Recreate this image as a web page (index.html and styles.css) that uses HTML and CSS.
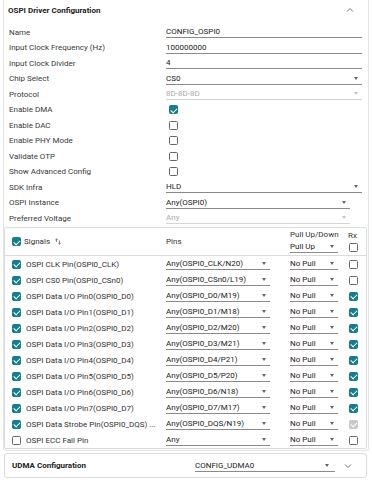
FILE: index.html
```html
<!DOCTYPE html>
<html>
<head>
<meta charset="utf-8">
<link rel="stylesheet" href="styles.css">
</head>
<body>
<div class="panel">
  <div class="panel-head">
    <span class="title">OSPI Driver Configuration</span>
    <svg class="chev" width="8" height="6" viewBox="0 0 8 6"><path d="M1 4.5 L4 1.5 L7 4.5" fill="none" stroke="#777" stroke-width="1"/></svg>
  </div>
  <div class="form">
    <div class="row"><span class="lbl">Name</span><div class="field text">CONFIG_OSPI0</div></div>
    <div class="row"><span class="lbl">Input Clock Frequency (Hz)</span><div class="field text">100000000</div></div>
    <div class="row"><span class="lbl">Input Clock Divider</span><div class="field text">4</div></div>
    <div class="row"><span class="lbl">Chip Select</span><div class="field select">CS0<i class="arr"></i></div></div>
    <div class="row"><span class="lbl">Protocol</span><div class="field select disabled">8D-8D-8D<i class="arr"></i></div></div>
    <div class="row"><span class="lbl">Enable DMA</span><span class="cb on"></span></div>
    <div class="row"><span class="lbl">Enable DAC</span><span class="cb"></span></div>
    <div class="row"><span class="lbl">Enable PHY Mode</span><span class="cb"></span></div>
    <div class="row"><span class="lbl">Validate OTP</span><span class="cb"></span></div>
    <div class="row"><span class="lbl">Show Advanced Config</span><span class="cb"></span></div>
    <div class="row"><span class="lbl">SDK Infra</span><div class="field select">HLD<i class="arr"></i></div></div>
    <div class="row"><span class="lbl">OSPI Instance</span><div class="field select short">Any(OSPI0)<i class="arr"></i></div></div>
    <div class="row"><span class="lbl">Preferred Voltage</span><div class="field select short disabled">Any<i class="arr"></i></div></div>
  </div>
  <div class="signals">
    <div class="sig-head">
      <div class="c-name"><span class="cb on"></span><span class="sig-title">Signals</span>
        <svg class="sort" width="6" height="7" viewBox="0 0 6 7"><path d="M1.5 4 V0.8 M0.4 1.9 L1.5 0.8 L2.6 1.9 M4.5 2.5 V6.2 M3.4 5.1 L4.5 6.2 L5.6 5.1" fill="none" stroke="#666" stroke-width="0.8"/></svg>
      </div>
      <div class="c-pins">Pins</div>
      <div class="c-pull"><span class="pud">Pull Up/Down</span><div class="sel pull">Pull Up<i class="arr"></i></div></div>
      <div class="c-rx"><span class="rx">Rx</span><span class="cb"></span></div>
    </div>
    <div class="sig-row"><div class="c-name"><span class="cb on"></span><span class="sn">OSPI CLK Pin(OSPI0_CLK)</span></div><div class="c-pins"><div class="sel pin">Any(OSPI0_CLK/N20)<i class="arr"></i></div></div><div class="c-pull"><div class="sel pull">No Pull<i class="arr"></i></div></div><div class="c-rx"><span class="cb"></span></div></div>
    <div class="sig-row"><div class="c-name"><span class="cb on"></span><span class="sn">OSPI CS0 Pin(OSPI0_CSn0)</span></div><div class="c-pins"><div class="sel pin">Any(OSPI0_CSn0/L19)<i class="arr"></i></div></div><div class="c-pull"><div class="sel pull">No Pull<i class="arr"></i></div></div><div class="c-rx"><span class="cb"></span></div></div>
    <div class="sig-row"><div class="c-name"><span class="cb on"></span><span class="sn">OSPI Data I/O Pin0(OSPI0_D0)</span></div><div class="c-pins"><div class="sel pin">Any(OSPI0_D0/M19)<i class="arr"></i></div></div><div class="c-pull"><div class="sel pull">No Pull<i class="arr"></i></div></div><div class="c-rx"><span class="cb on"></span></div></div>
    <div class="sig-row"><div class="c-name"><span class="cb on"></span><span class="sn">OSPI Data I/O Pin1(OSPI0_D1)</span></div><div class="c-pins"><div class="sel pin">Any(OSPI0_D1/M18)<i class="arr"></i></div></div><div class="c-pull"><div class="sel pull">No Pull<i class="arr"></i></div></div><div class="c-rx"><span class="cb on"></span></div></div>
    <div class="sig-row"><div class="c-name"><span class="cb on"></span><span class="sn">OSPI Data I/O Pin2(OSPI0_D2)</span></div><div class="c-pins"><div class="sel pin">Any(OSPI0_D2/M20)<i class="arr"></i></div></div><div class="c-pull"><div class="sel pull">No Pull<i class="arr"></i></div></div><div class="c-rx"><span class="cb on"></span></div></div>
    <div class="sig-row"><div class="c-name"><span class="cb on"></span><span class="sn">OSPI Data I/O Pin3(OSPI0_D3)</span></div><div class="c-pins"><div class="sel pin">Any(OSPI0_D3/M21)<i class="arr"></i></div></div><div class="c-pull"><div class="sel pull">No Pull<i class="arr"></i></div></div><div class="c-rx"><span class="cb on"></span></div></div>
    <div class="sig-row"><div class="c-name"><span class="cb on"></span><span class="sn">OSPI Data I/O Pin4(OSPI0_D4)</span></div><div class="c-pins"><div class="sel pin">Any(OSPI0_D4/P21)<i class="arr"></i></div></div><div class="c-pull"><div class="sel pull">No Pull<i class="arr"></i></div></div><div class="c-rx"><span class="cb on"></span></div></div>
    <div class="sig-row"><div class="c-name"><span class="cb on"></span><span class="sn">OSPI Data I/O Pin5(OSPI0_D5)</span></div><div class="c-pins"><div class="sel pin">Any(OSPI0_D5/P20)<i class="arr"></i></div></div><div class="c-pull"><div class="sel pull">No Pull<i class="arr"></i></div></div><div class="c-rx"><span class="cb on"></span></div></div>
    <div class="sig-row"><div class="c-name"><span class="cb on"></span><span class="sn">OSPI Data I/O Pin6(OSPI0_D6)</span></div><div class="c-pins"><div class="sel pin">Any(OSPI0_D6/N18)<i class="arr"></i></div></div><div class="c-pull"><div class="sel pull">No Pull<i class="arr"></i></div></div><div class="c-rx"><span class="cb on"></span></div></div>
    <div class="sig-row"><div class="c-name"><span class="cb on"></span><span class="sn">OSPI Data I/O Pin7(OSPI0_D7)</span></div><div class="c-pins"><div class="sel pin">Any(OSPI0_D7/M17)<i class="arr"></i></div></div><div class="c-pull"><div class="sel pull">No Pull<i class="arr"></i></div></div><div class="c-rx"><span class="cb on"></span></div></div>
    <div class="sig-row"><div class="c-name"><span class="cb on"></span><span class="sn">OSPI Data Strobe Pin(OSPI0_DQS) ...</span></div><div class="c-pins"><div class="sel pin">Any(OSPI0_DQS/N19)<i class="arr"></i></div></div><div class="c-pull"><div class="sel pull">No Pull<i class="arr"></i></div></div><div class="c-rx"><span class="cb on dis"></span></div></div>
    <div class="sig-row"><div class="c-name"><span class="cb"></span><span class="sn">OSPI ECC Fail Pin</span></div><div class="c-pins"><div class="sel pin">Any<i class="arr"></i></div></div><div class="c-pull"><div class="sel pull">No Pull<i class="arr"></i></div></div><div class="c-rx"><span class="cb"></span></div></div>
  </div>
</div>
<div class="udma">
  <span class="title">UDMA Configuration</span>
  <div class="sel udma-sel">CONFIG_UDMA0<i class="arr"></i></div>
  <svg class="chev" width="8" height="6" viewBox="0 0 8 6"><path d="M1 1.5 L4 4.5 L7 1.5" fill="none" stroke="#777" stroke-width="1"/></svg>
</div>
</body>
</html>
```
FILE: styles.css
```css
* { box-sizing: border-box; }
body {
  margin: 0;
  background: #fff;
  font-family: Roboto, "Noto Sans", sans-serif;
  font-size: 8px;
  color: #333;
}
.panel {
  margin: 0 3px;
  border: 1px solid #e4e4e4;
  border-top: none;
  border-radius: 0 0 3px 3px;
  padding-bottom: 1px;
}
.panel-head {
  height: 24.5px;
  display: flex;
  align-items: center;
  justify-content: space-between;
  padding: 0 14px 0 4px;
}
.title {
  font-weight: bold;
  color: #222;
  font-size: 8px;
}
.panel-head .title { margin-top: -3px; }
.chev { display: block; }
.panel-head .chev { margin-top: -4px; }
.form { padding: 0 6px 0 5px; }
.row {
  height: 15.5px;
  display: flex;
  align-items: center;
}
.lbl {
  width: 157px;
  flex: none;
  color: #3a3a3a;
}
.field {
  flex: 1;
  height: 12px;
  line-height: 11px;
  border-bottom: 1px solid #8a8a8a;
  position: relative;
  color: #222;
  white-space: nowrap;
}
.field.short { flex: none; width: 184px; }
.field.disabled { color: #aaa; border-bottom-color: #d4d4d4; }
.arr {
  position: absolute;
  right: 4px;
  top: 4px;
  width: 0;
  height: 0;
  border-left: 2.5px solid transparent;
  border-right: 2.5px solid transparent;
  border-top: 3px solid #666;
}
.disabled .arr { border-top-color: #c4c4c4; }
.cb {
  display: inline-block;
  flex: none;
  width: 9px;
  height: 9px;
  border: 1px solid #666;
  border-radius: 1.5px;
  background: #fff;
  position: relative;
}
.row .cb { margin-left: 3px; }
.cb.on {
  background: #177d8b;
  border-color: #177d8b;
}
.cb.on::after {
  content: "";
  position: absolute;
  left: 1.6px;
  top: 0.6px;
  width: 3px;
  height: 4.6px;
  border: solid #fff;
  border-width: 0 1.2px 1.2px 0;
  transform: rotate(45deg);
}
.cb.on.dis { background: #c9c9c9; border-color: #c9c9c9; }
.signals {
  margin: 1px 1px 0 0;
  border: 1px solid #dcdcdc;
  border-radius: 2px;
}
.sig-head, .sig-row {
  display: grid;
  grid-template-columns: 161px 124px 59px 1fr;
  align-items: center;
}
.sig-head {
  height: 28px;
  border-bottom: 1px solid #dcdcdc;
}
.sig-row { height: 16px; }
.c-name {
  display: flex;
  align-items: center;
  padding-left: 7px;
  white-space: nowrap;
}
.sig-title { margin-left: 3px; color: #333; }
.sort { margin-left: 5px; margin-top: -1px; }
.sn { margin-left: 5px; color: #333; }
.c-pins { color: #333; }
.c-pull, .c-rx {
  display: flex;
  flex-direction: column;
  align-items: flex-start;
}
.sig-head .c-pull { margin-top: -2px; }
.pud { line-height: 11px; margin-bottom: 1px; }
.rx { line-height: 11px; margin-bottom: 2px; margin-left: -1px; }
.sig-head .c-rx { margin-top: -1px; }
.sel {
  height: 12px;
  line-height: 11px;
  border-bottom: 1px solid #8a8a8a;
  position: relative;
  color: #222;
  white-space: nowrap;
}
.sel.pin { width: 104px; }
.sel.pull { width: 48px; }
.udma {
  margin: 2px 5px 0 4px;
  height: 25px;
  border: 1px solid #dcdcdc;
  border-radius: 3px;
  display: flex;
  align-items: center;
  padding: 0 14px 0 7px;
}
.udma .title { width: 183px; }
.sel.udma-sel { width: 140px; margin-top: 1px; }
.udma-sel .arr { right: 6px; }
.udma .chev { margin-left: auto; }
```
